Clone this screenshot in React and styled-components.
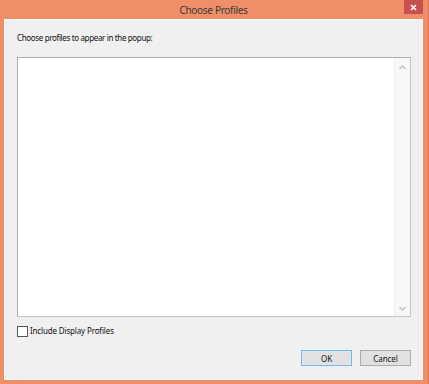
import styled, { createGlobalStyle } from "styled-components";

const Global = createGlobalStyle`
  html, body { margin: 0; padding: 0; background: #ef8e67; }
  * { box-sizing: border-box; }
`;

export default function App() {
  return (
    <>
      <Global />
      <Window>
        <TitleBar>
          <span />
          <Title>Choose Profiles</Title>
          <CloseCell>
            <Close>
              <svg width="7" height="7" viewBox="0 0 7 7">
                <path d="M1 1L6 6M6 1L1 6" stroke="#fff" strokeWidth="1.6" />
              </svg>
            </Close>
          </CloseCell>
        </TitleBar>
        <Client>
          <Label>Choose profiles to appear in the popup:</Label>
          <ListBox>
            <Items />
            <ScrollBar>
              <Arrow>
                <svg width="7" height="5" viewBox="0 0 7 5">
                  <path d="M0.5 4L3.5 1L6.5 4" stroke="#c2c2c2" strokeWidth="1.3" fill="none" />
                </svg>
              </Arrow>
              <Arrow>
                <svg width="7" height="5" viewBox="0 0 7 5">
                  <path d="M0.5 1L3.5 4L6.5 1" stroke="#c2c2c2" strokeWidth="1.3" fill="none" />
                </svg>
              </Arrow>
            </ScrollBar>
          </ListBox>
          <CheckRow>
            <Box />
            <CheckLabel>Include Display Profiles</CheckLabel>
          </CheckRow>
          <Buttons>
            <Button $default>OK</Button>
            <Button>Cancel</Button>
          </Buttons>
        </Client>
      </Window>
    </>
  );
}

const Window = styled.div`
  width: 429px;
  height: 384px;
  display: flex;
  flex-direction: column;
  background: #ef8e67;
  border-right: 1px solid #d97a55;
  padding: 0 5px 4px 4px;
  font-family: "Noto Sans", "Open Sans", sans-serif;
  color: #111;
`;

const TitleBar = styled.div`
  height: 19px;
  display: grid;
  grid-template-columns: 1fr auto 1fr;
  align-items: start;
`;

const Title = styled.div`
  font-size: 10px;
  letter-spacing: -0.3px;
  line-height: 21px;
  color: #3a3a3a;
`;

const CloseCell = styled.div`
  display: flex;
  justify-content: flex-end;
`;

const Close = styled.div`
  width: 19px;
  height: 14px;
  background: #c75050;
  display: flex;
  align-items: center;
  justify-content: center;
`;

const Client = styled.div`
  flex: 1;
  display: flex;
  flex-direction: column;
  background: #f0f0f0;
  border: 1px solid #f8f8f8;
  padding: 11px 11px 13px 12px;
`;

const Label = styled.div`
  font-size: 8px;
  letter-spacing: -0.35px;
  line-height: 14px;
  margin-bottom: 12px;
`;

const ListBox = styled.div`
  flex: 1;
  display: flex;
  background: #fff;
  border: 1px solid #aeaeae;
  border-bottom-color: #c6c6c6;
  border-right-color: #c6c6c6;
`;

const Items = styled.div`
  flex: 1;
`;

const ScrollBar = styled.div`
  width: 16px;
  display: flex;
  flex-direction: column;
  justify-content: space-between;
  background: #f7f7f7;
  border-left: 1px solid #f0f0f0;
  padding: 5px 0 4px;
`;

const Arrow = styled.div`
  height: 8px;
  display: flex;
  align-items: center;
  justify-content: center;
`;

const CheckRow = styled.div`
  display: flex;
  align-items: center;
  gap: 2px;
  margin-top: 8px;
  height: 12px;
`;

const Box = styled.div`
  width: 11px;
  height: 11px;
  border: 1px solid #555;
  background: #fff;
`;

const CheckLabel = styled.span`
  font-size: 8px;
  letter-spacing: -0.15px;
  line-height: 12px;
`;

const Buttons = styled.div`
  display: flex;
  justify-content: flex-end;
  gap: 8px;
  margin-top: 13px;
`;

const Button = styled.div`
  width: 51px;
  height: 16px;
  display: flex;
  align-items: center;
  justify-content: center;
  font-size: 8px;
  letter-spacing: -0.1px;
  background: #e1e1e1;
  border: 1px solid ${(p) => (p.$default ? "#7ab4ec" : "#adadad")};
  box-shadow: ${(p) => (p.$default ? "inset 0 0 0 1px #d8e8f8" : "none")};
`;
